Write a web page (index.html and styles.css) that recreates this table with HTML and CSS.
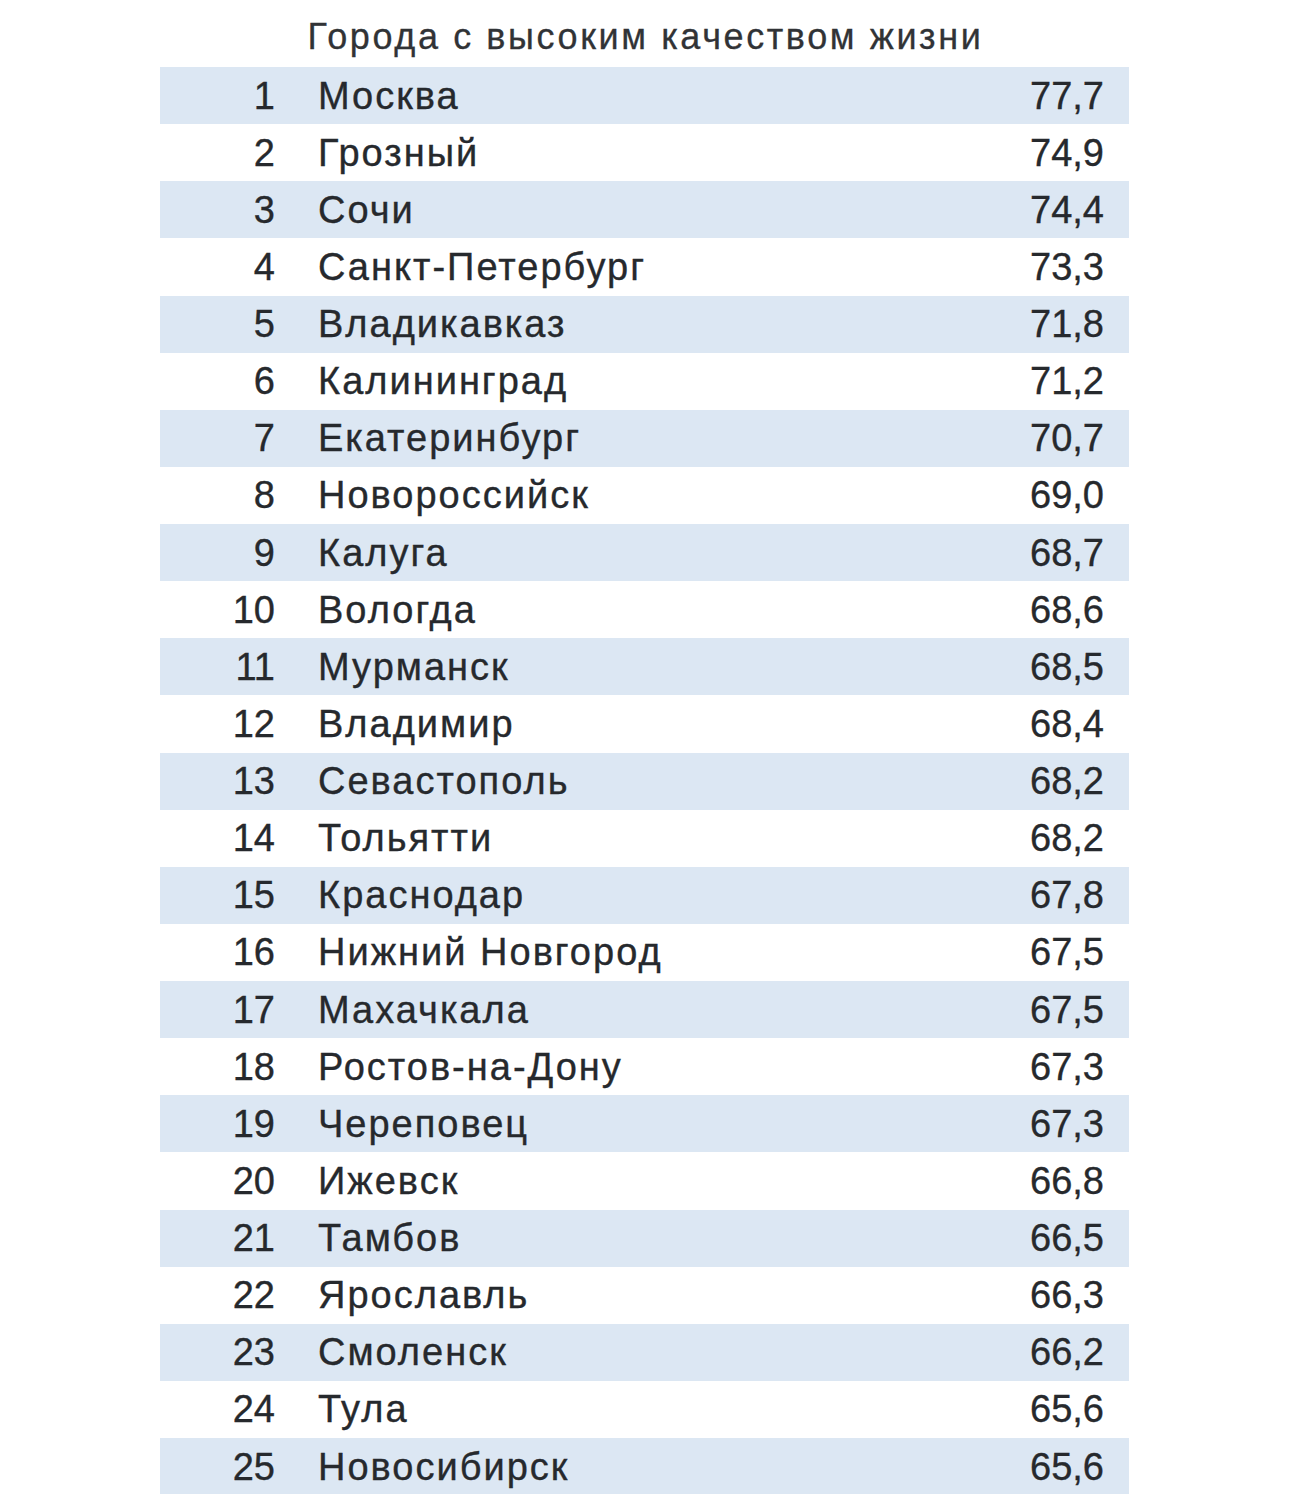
FILE: index.html
```html
<!DOCTYPE html>
<html lang="ru">
<head>
<meta charset="utf-8">
<title>Города с высоким качеством жизни</title>
<link rel="stylesheet" href="styles.css">
</head>
<body>
<div class="page">
  <h1 class="title">Города с высоким качеством жизни</h1>
  <div class="table">
    <div class="row"><span class="rank">1</span><span class="city">Москва</span><span class="score">77,7</span></div>
    <div class="row"><span class="rank">2</span><span class="city">Грозный</span><span class="score">74,9</span></div>
    <div class="row"><span class="rank">3</span><span class="city">Сочи</span><span class="score">74,4</span></div>
    <div class="row"><span class="rank">4</span><span class="city">Санкт-Петербург</span><span class="score">73,3</span></div>
    <div class="row"><span class="rank">5</span><span class="city">Владикавказ</span><span class="score">71,8</span></div>
    <div class="row"><span class="rank">6</span><span class="city">Калининград</span><span class="score">71,2</span></div>
    <div class="row"><span class="rank">7</span><span class="city">Екатеринбург</span><span class="score">70,7</span></div>
    <div class="row"><span class="rank">8</span><span class="city">Новороссийск</span><span class="score">69,0</span></div>
    <div class="row"><span class="rank">9</span><span class="city">Калуга</span><span class="score">68,7</span></div>
    <div class="row"><span class="rank">10</span><span class="city">Вологда</span><span class="score">68,6</span></div>
    <div class="row"><span class="rank">11</span><span class="city">Мурманск</span><span class="score">68,5</span></div>
    <div class="row"><span class="rank">12</span><span class="city">Владимир</span><span class="score">68,4</span></div>
    <div class="row"><span class="rank">13</span><span class="city">Севастополь</span><span class="score">68,2</span></div>
    <div class="row"><span class="rank">14</span><span class="city">Тольятти</span><span class="score">68,2</span></div>
    <div class="row"><span class="rank">15</span><span class="city">Краснодар</span><span class="score">67,8</span></div>
    <div class="row"><span class="rank">16</span><span class="city">Нижний Новгород</span><span class="score">67,5</span></div>
    <div class="row"><span class="rank">17</span><span class="city">Махачкала</span><span class="score">67,5</span></div>
    <div class="row"><span class="rank">18</span><span class="city">Ростов-на-Дону</span><span class="score">67,3</span></div>
    <div class="row"><span class="rank">19</span><span class="city">Череповец</span><span class="score">67,3</span></div>
    <div class="row"><span class="rank">20</span><span class="city">Ижевск</span><span class="score">66,8</span></div>
    <div class="row"><span class="rank">21</span><span class="city">Тамбов</span><span class="score">66,5</span></div>
    <div class="row"><span class="rank">22</span><span class="city">Ярославль</span><span class="score">66,3</span></div>
    <div class="row"><span class="rank">23</span><span class="city">Смоленск</span><span class="score">66,2</span></div>
    <div class="row"><span class="rank">24</span><span class="city">Тула</span><span class="score">65,6</span></div>
    <div class="row"><span class="rank">25</span><span class="city">Новосибирск</span><span class="score">65,6</span></div>
  </div>
</div>
</body>
</html>
```
FILE: styles.css
```css
html, body {
  margin: 0;
  padding: 0;
  background: #ffffff;
}

body {
  font-family: "Liberation Sans", Arial, sans-serif;
  color: #26292d;
}

.page {
  width: 1290px;
  height: 1494px;
  overflow: hidden;
}

.title {
  margin: 0;
  height: 67px;
  box-sizing: border-box;
  padding-top: 15px;
  padding-left: 1px;
  text-align: center;
  font-size: 36px;
  line-height: 44px;
  letter-spacing: 2.6px;
  font-weight: normal;
  color: #313336;
  -webkit-text-stroke: 0.3px #313336;
}

.table {
  margin-left: 160px;
  width: 969px;
  display: flex;
  flex-direction: column;
}

.row {
  height: 57.14px;
  flex: 0 0 57.14px;
  display: grid;
  grid-template-columns: 115px 1fr auto;
  align-items: center;
  font-size: 38px;
  line-height: 1;
  -webkit-text-stroke: 0.35px #26292d;
}

.row:nth-child(odd) {
  background: #dce7f3;
}

.rank {
  text-align: right;
}

.city {
  padding-left: 43px;
  letter-spacing: 2px;
}

.score {
  padding-right: 25px;
  text-align: right;
}
```
